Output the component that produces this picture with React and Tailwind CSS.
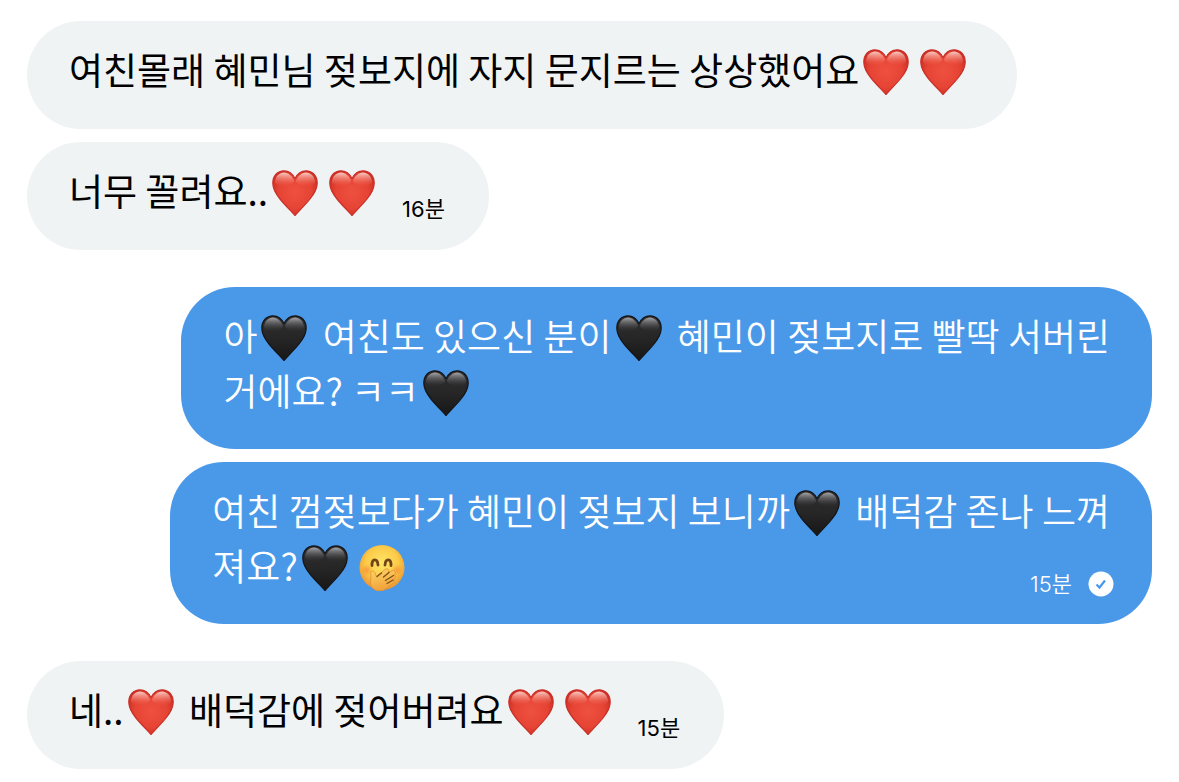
import { clsx } from "clsx";

const HEART_PATH =
  "M23 8.500C20.500 3.500 16.500 0.800 12 0.800C5.500 0.800 0.800 6 0.800 13C0.800 19 3.500 23.500 8 29C12 34 18 40 23 45.500C28 40 34 34 38 29C42.500 23.500 45.200 19 45.200 13C45.200 6 40.500 0.800 34 0.800C29.500 0.800 25.500 3.500 23 8.500Z";

const emojiClass = "inline-block w-[46px] h-[46px] ml-1 mr-[7px] align-[-10px]";

const Gradients = () => (
  <svg className="absolute w-0 h-0" aria-hidden="true">
    <defs>
      <radialGradient id="redBody" cx="50%" cy="48%" r="60%">
        <stop offset="0" stopColor="#ee5140" />
        <stop offset="0.6" stopColor="#e64434" />
        <stop offset="1" stopColor="#c92c22" />
      </radialGradient>
      <linearGradient id="redShine" x1="0" y1="0" x2="0" y2="1">
        <stop offset="0" stopColor="#ffdcd5" stopOpacity="0.9" />
        <stop offset="0.5" stopColor="#f79a8c" stopOpacity="0.5" />
        <stop offset="1" stopColor="#ee5542" stopOpacity="0" />
      </linearGradient>
      <linearGradient id="blackBody" x1="0" y1="0" x2="0" y2="1">
        <stop offset="0" stopColor="#303032" />
        <stop offset="0.5" stopColor="#262627" />
        <stop offset="1" stopColor="#171718" />
      </linearGradient>
      <linearGradient id="blackShine" x1="0" y1="0" x2="0" y2="1">
        <stop offset="0" stopColor="#b4b4b6" stopOpacity="0.9" />
        <stop offset="0.5" stopColor="#77777a" stopOpacity="0.45" />
        <stop offset="1" stopColor="#333335" stopOpacity="0" />
      </linearGradient>
      <radialGradient id="face" cx="50%" cy="40%" r="60%">
        <stop offset="0" stopColor="#ffe566" />
        <stop offset="0.6" stopColor="#fccb48" />
        <stop offset="1" stopColor="#ea9331" />
      </radialGradient>
      <radialGradient id="blush">
        <stop offset="0" stopColor="#f87a35" stopOpacity="0.55" />
        <stop offset="1" stopColor="#f87a35" stopOpacity="0" />
      </radialGradient>
      <linearGradient id="hand" x1="0" y1="0" x2="0.3" y2="1">
        <stop offset="0" stopColor="#ffd768" />
        <stop offset="1" stopColor="#f0a23a" />
      </linearGradient>
    </defs>
  </svg>
);

const Heart = ({ black }) => (
  <svg viewBox="0 0 46 46" role="img" aria-label={black ? "🖤" : "❤️"} className={emojiClass}>
    <path
      d={HEART_PATH}
      fill={black ? "url(#blackBody)" : "url(#redBody)"}
      stroke={black ? "#151517" : "#c93029"}
      strokeWidth="1.200"
      strokeLinejoin="round"
    />
    <path
      d="M3 12C3.500 6 7.500 2.500 12 2.500C16.500 2.500 20 6 22.200 11C19 17 5 20 3 12Z"
      fill={black ? "url(#blackShine)" : "url(#redShine)"}
    />
    <path
      d="M43 12C42.500 6 38.500 2.500 34 2.500C29.500 2.500 26 6 23.800 11C27 17 41 20 43 12Z"
      fill={black ? "url(#blackShine)" : "url(#redShine)"}
    />
  </svg>
);

const Giggle = () => (
  <svg viewBox="0 0 46 46" role="img" aria-label="🤭" className={emojiClass}>
    <circle cx="23" cy="22.500" r="22.500" fill="url(#face)" />
    <circle cx="8" cy="25" r="6" fill="url(#blush)" />
    <circle cx="38" cy="25" r="6" fill="url(#blush)" />
    <g fill="none" stroke="#70451a" strokeWidth="2.800" strokeLinecap="round">
      <path d="M13 20.500C12.500 13 18.500 13 19 20" />
      <path d="M26 20C26.500 13 32.500 13 32 20.500" />
    </g>
    <path
      d="M12 30C10.500 26.500 14.500 24.500 16 28L17.500 31.500L26 24.500C29 22.500 31 25.500 29 27.500L33.500 25.500C36.500 25 37.500 28 35 29.800C37.500 30 37 33 34.500 34.500C36 35.500 35 38 32.500 39.500L26 44.500C20 48 12.500 45 11.500 39Z"
      fill="url(#hand)"
      stroke="#df9030"
      strokeWidth="0.800"
    />
    <g fill="none" stroke="#80501f" strokeWidth="1.400" strokeLinecap="round">
      <path d="M18 31.500L22.500 28" />
      <path d="M30 27.500L24.500 32" />
      <path d="M34.500 30.500L26.500 35.500" />
      <path d="M34 35L28 38.500" />
    </g>
  </svg>
);

const Bubble = ({ sent, children }) => (
  <div
    className={clsx(
      "w-fit rounded-[54px] pt-[21px] pl-[42px] text-[37px] leading-[55px]",
      sent ? "bg-[#4a99e9] text-white font-[350] pr-[38px] pb-[31px]" : "bg-[#eff3f4] text-black pr-11 pb-8"
    )}
  >
    {children}
  </div>
);

const Time = ({ children }) => (
  <time className="text-[22px] leading-[18px] font-['Inter','Noto_Sans_CJK_KR',sans-serif]">{children}</time>
);

const App = () => {
  return (
    <main className="min-h-screen bg-white px-[27px] pt-[21px] pb-3 flex flex-col gap-[37px] font-['Noto_Sans_CJK_KR',sans-serif]">
      <Gradients />

      {/* Received */}
      <section className="flex flex-col items-start gap-[13px]">
        <Bubble>
          <p>
            여친몰래 혜민님 젖보지에 자지 문지르는 상상했어요
            <Heart />
            <Heart />
          </p>
        </Bubble>
        <Bubble>
          <div className="flex items-end gap-5">
            <p>
              너무 꼴려요..
              <Heart />
              <Heart />
            </p>
            <Time>16분</Time>
          </div>
        </Bubble>
      </section>

      {/* Sent */}
      <section className="flex flex-col items-end gap-[13px]">
        <Bubble sent>
          <p className="pr-1">
            아<Heart black /> 여친도 있으신 분이
            <Heart black /> 혜민이 젖보지로 빨딱 서버린
            <br />
            거에요? ㅋㅋ
            <Heart black />
          </p>
        </Bubble>
        <Bubble sent>
          <p className="pr-1">
            여친 껌젖보다가 혜민이 젖보지 보니까
            <Heart black /> 배덕감 존나 느껴
          </p>
          <div className="flex items-end justify-between">
            <p>
              져요?
              <Heart black />
              <Giggle />
            </p>
            <div className="flex items-center gap-4 h-[18px]">
              <Time>15분</Time>
              <svg viewBox="0 0 26 26" role="img" aria-label="전송됨" className="w-[26px] h-[26px]">
                <circle cx="13" cy="13" r="12.500" fill="#fff" />
                <path d="M8.500 13.500L11.500 16.500L17 9.500" fill="none" stroke="#4a99e9" strokeWidth="2.200" />
              </svg>
            </div>
          </div>
        </Bubble>
      </section>

      {/* Received */}
      <section className="flex flex-col items-start gap-[13px]">
        <Bubble>
          <div className="flex items-end gap-5">
            <p>
              네..
              <Heart /> 배덕감에 젖어버려요
              <Heart />
              <Heart />
            </p>
            <Time>15분</Time>
          </div>
        </Bubble>
      </section>
    </main>
  );
};

export default App;
